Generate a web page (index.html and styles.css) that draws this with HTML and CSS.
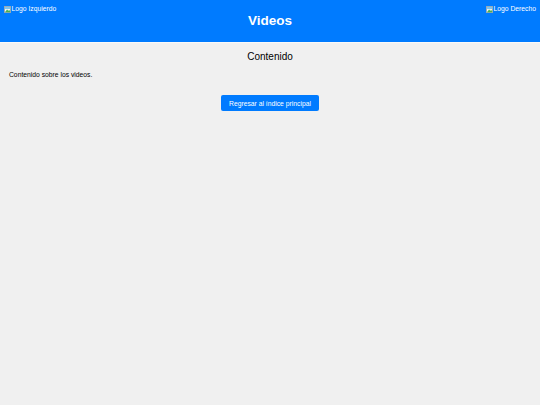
FILE: index.html
```html
<!DOCTYPE html>
<html lang="es">
<head>
<meta charset="utf-8">
<title>Videos</title>
<link rel="stylesheet" href="styles.css">
</head>
<body>
<header class="header">
  <div class="logo logo-left">
    <svg class="broken" viewBox="0 0 8 8" width="7" height="7" aria-hidden="true">
      <rect x="0.5" y="0.5" width="7" height="7" fill="#f4f4f4" stroke="#9aa7b0" stroke-width="1"/>
      <path d="M1 7 L3.5 4 L5 5.5 L6 4.5 L7 6 L7 7 Z" fill="#4caf50"/>
      <rect x="1" y="1" width="6" height="2.5" fill="#7cc3f0"/>
    </svg><span>Logo Izquierdo</span>
  </div>
  <h1 class="title">Videos</h1>
  <div class="logo logo-right">
    <svg class="broken" viewBox="0 0 8 8" width="7" height="7" aria-hidden="true">
      <rect x="0.5" y="0.5" width="7" height="7" fill="#f4f4f4" stroke="#9aa7b0" stroke-width="1"/>
      <path d="M1 7 L3.5 4 L5 5.5 L6 4.5 L7 6 L7 7 Z" fill="#4caf50"/>
      <rect x="1" y="1" width="6" height="2.5" fill="#7cc3f0"/>
    </svg><span>Logo Derecho</span>
  </div>
</header>
<main class="content">
  <h2 class="section-title">Contenido</h2>
  <p class="text">Contenido sobre los videos.</p>
  <div class="actions">
    <a class="button" href="#">Regresar al índice principal</a>
  </div>
</main>
</body>
</html>
```

FILE: styles.css
```css
html, body {
  margin: 0;
  padding: 0;
}
body {
  background: #f0f0f0;
  font-family: "Liberation Sans", Arial, Helvetica, sans-serif;
  font-size: 6.75px;
  color: #000;
}
.header {
  background: #007bff;
  color: #fff;
  height: 42px;
  display: grid;
  grid-template-columns: 1fr auto 1fr;
  box-shadow: 0 1px 1px rgba(255, 255, 255, 0.6);
}
.logo {
  display: flex;
  align-items: center;
  padding-top: 5px;
  line-height: 8px;
  height: 8px;
}
.logo-left {
  justify-self: start;
  padding-left: 4px;
}
.logo-right {
  justify-self: end;
  padding-right: 4px;
}
.broken {
  display: block;
  margin-right: 0.5px;
}
.title {
  margin: 0;
  align-self: center;
  font-size: 13.5px;
  font-weight: bold;
  line-height: 16px;
}
.content {
  padding: 0 9px;
}
.section-title {
  margin: 9px 0 0;
  font-size: 10px;
  font-weight: normal;
  line-height: 12px;
  text-align: center;
}
.text {
  margin: 8px 0 0;
  line-height: 8px;
}
.actions {
  display: flex;
  justify-content: center;
  margin-top: 16px;
}
.button {
  display: flex;
  align-items: center;
  height: 16px;
  padding: 0 8.4px;
  background: #007bff;
  color: #fff;
  border-radius: 2px;
  text-decoration: none;
}
```
